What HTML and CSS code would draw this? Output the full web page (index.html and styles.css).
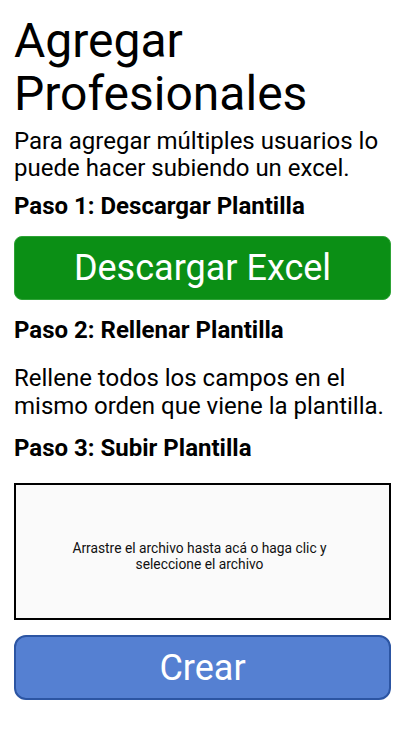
FILE: index.html
```html
<!DOCTYPE html>
<html lang="es">
<head>
  <meta charset="UTF-8">
  <meta name="viewport" content="width=device-width, initial-scale=1.0">
  <title>Agregar Profesionales</title>
  <link rel="stylesheet" href="styles.css">
</head>
<body>
  <div class="page">
    <h1 class="title">Agregar Profesionales</h1>
    <p class="intro">Para agregar múltiples usuarios lo puede hacer subiendo un excel.</p>

    <h2 class="step step-1">Paso 1: Descargar Plantilla</h2>
    <button class="btn btn-download">Descargar Excel</button>

    <h2 class="step step-2">Paso 2: Rellenar Plantilla</h2>
    <p class="text">Rellene todos los campos en el mismo orden que viene la plantilla.</p>

    <h2 class="step step-3">Paso 3: Subir Plantilla</h2>
    <div class="dropzone">
      <p>Arrastre el archivo hasta acá o haga clic y seleccione el archivo</p>
    </div>

    <button class="btn btn-create">Crear</button>
  </div>
</body>
</html>
```

FILE: styles.css
```css
body {
  margin: 0;
  font-family: Roboto, "Noto Sans", sans-serif;
  color: #000;
  background: #fff;
}
.page {
  width: 377px;
  padding: 14px 0 0 14px;
}
.title {
  font-size: 48px;
  font-weight: 400;
  line-height: 53px;
  margin: 0;
}
.intro {
  font-size: 24px;
  line-height: 27px;
  margin: 8px 0 0;
}
.text {
  font-size: 24px;
  line-height: 28px;
  margin: 22px 0 0;
}
.step {
  font-size: 24px;
  font-weight: 700;
  line-height: 24px;
  margin: 12px 0 0;
}
.step-2 {
  margin-top: 18px;
}
.step-3 {
  margin-top: 16px;
}
.btn {
  display: block;
  width: 100%;
  color: #fff;
  font-family: Roboto, "Noto Sans", sans-serif;
  font-size: 36px;
  cursor: pointer;
}
.btn-download {
  height: 64px;
  margin-top: 18px;
  background: #0b8f15;
  border: 1px solid #2ea336;
  border-radius: 8px;
}
.dropzone {
  height: 137px;
  margin-top: 23px;
  padding: 8px 6px 0 0;
  box-sizing: border-box;
  border: 2px solid #000;
  background: #fafafa;
  display: flex;
  align-items: center;
  justify-content: center;
}
.dropzone p {
  width: 270px;
  margin: 0;
  font-size: 13.8px;
  line-height: 16px;
  text-align: center;
  color: #111;
}
.btn-create {
  height: 65px;
  margin-top: 15px;
  background: #5580d2;
  border: 2px solid #2c55a3;
  border-radius: 12px;
}
```
